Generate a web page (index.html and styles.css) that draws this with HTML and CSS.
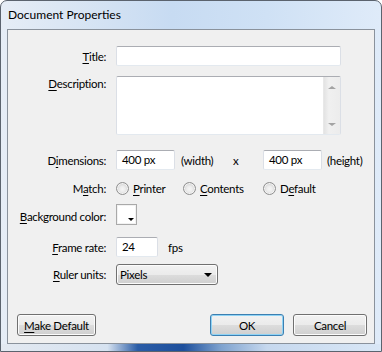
FILE: index.html
```html
<!DOCTYPE html>
<html lang="en">
<head>
  <meta charset="UTF-8" />
  <title>Document Properties</title>
  <link rel="stylesheet" href="styles.css">
</head>
<body>
  <div class="window">
    <div class="titlebar">Document Properties</div>
    <div class="client">
      <div class="row row-title">
        <label class="lbl"><u>T</u>itle:</label>
        <div class="field wide"></div>
      </div>

      <div class="row row-desc">
        <label class="lbl"><u>D</u>escription:</label>
        <div class="field textarea">
          <div class="ta-body"></div>
          <div class="ta-scroll">
            <span class="arrow-up"></span>
            <span class="arrow-down"></span>
          </div>
        </div>
      </div>

      <div class="row row-dims">
        <label class="lbl">D<u>i</u>mensions:</label>
        <div class="field dim">400 px</div>
        <span class="dim-unit">(width)</span>
        <span class="dim-x">x</span>
        <div class="field dim">400 px</div>
        <span class="dim-unit2">(height)</span>
      </div>

      <div class="row row-match">
        <label class="lbl">M<u>a</u>tch:</label>
        <div class="opt opt1"><span class="radio"></span><span><u>P</u>rinter</span></div>
        <div class="opt opt2"><span class="radio"></span><span><u>C</u>ontents</span></div>
        <div class="opt"><span class="radio"></span><span>D<u>e</u>fault</span></div>
      </div>

      <div class="row row-bg">
        <label class="lbl"><u>B</u>ackground color:</label>
        <div class="swatch"><span class="swatch-arrow"></span></div>
      </div>

      <div class="row row-fps">
        <label class="lbl"><u>F</u>rame rate:</label>
        <div class="field fps">24</div>
        <span class="fps-unit">fps</span>
      </div>

      <div class="row row-ruler">
        <label class="lbl"><u>R</u>uler units:</label>
        <div class="select">
          <span>Pixels</span>
          <span class="select-arrow"></span>
        </div>
      </div>

      <div class="buttons">
        <button class="btn btn-make"><u>M</u>ake Default</button>
        <div class="btn-group">
          <button class="btn btn-ok">OK</button>
          <button class="btn">Cancel</button>
        </div>
      </div>
    </div>
  </div>
</body>
</html>
```

FILE: styles.css
```css
* {
  margin: 0;
  padding: 0;
  box-sizing: border-box;
}
body {
  background: #ffffff;
  font-family: "Segoe UI", Lato, sans-serif;
  font-size: 11.5px;
  letter-spacing: -0.3px;
  color: #000;
  white-space: nowrap;
}
u {
  text-decoration: underline;
  text-underline-offset: 2px;
}
.window {
  width: 382px;
  height: 352px;
  border: 1px solid #5b636e;
  border-radius: 7px 7px 0 0;
  padding: 0 6px 7px;
  display: flex;
  flex-direction: column;
  background:
    linear-gradient(90deg, #e3e9f1 0%, #d6e2f0 28%, #2a5ca6 36%, #1d4f9c 48%, #7fa3cf 58%, #c6d8ee 70%, #d9e7f6 100%) bottom / 100% 7px no-repeat,
    linear-gradient(90deg, #e6edf6 0%, #dce7f4 15%, #c7dbf2 45%, #cfe1f5 70%, #dfebf9 100%);
}
.titlebar {
  height: 28px;
  line-height: 28px;
  padding-left: 1px;
  font-size: 12px;
  letter-spacing: 0;
}
.client {
  flex: 1;
  background: #f0f0f0;
  border: 1px solid #8a929c;
  display: flex;
  flex-direction: column;
  padding: 0 7px 7px 0;
}
.row {
  display: flex;
  align-items: center;
}
.lbl {
  width: 98px;
  margin-right: 10px;
  text-align: right;
  flex-shrink: 0;
}
.row-title { margin-top: 16px; }
.row-desc { margin-top: 10px; align-items: flex-start; }
.row-desc .lbl { padding-top: 1px; }
.row-dims { margin-top: 15px; }
.row-match { margin-top: 8px; height: 20px; }
.row-bg { margin-top: 6px; }
.row-bg .lbl { padding-top: 3px; }
.row-fps { margin-top: 12px; }
.row-ruler { margin-top: 7px; }

.field {
  height: 20px;
  background: #fff;
  border: 1px solid #dbdfe6;
  border-top-color: #abadb3;
  border-bottom-color: #e3e9ef;
  border-radius: 2px;
  padding: 0 5px;
  line-height: 18px;
}
.wide { width: 225px; }
.textarea {
  width: 225px;
  height: 59px;
  display: flex;
  padding: 0;
}
.ta-body { flex: 1; }
.ta-scroll {
  width: 17px;
  background: linear-gradient(90deg, #e3e3e3, #f0f0f0 30%, #ececec);
  border-left: 1px solid #e8e8e8;
  display: flex;
  flex-direction: column;
  justify-content: space-between;
  align-items: center;
  padding: 9px 0 8px;
}
.arrow-up {
  width: 0;
  height: 0;
  border-left: 4px solid transparent;
  border-right: 4px solid transparent;
  border-bottom: 3px solid #a3a3a3;
}
.arrow-down {
  width: 0;
  height: 0;
  border-left: 4px solid transparent;
  border-right: 4px solid transparent;
  border-top: 3px solid #a3a3a3;
}
.dim { width: 59px; }
.dim-unit { margin-left: 6px; width: 52px; }
.dim-x { width: 30px; }
.dim-unit2 { margin-left: 5px; }

.opt {
  display: flex;
  align-items: center;
  gap: 4px;
}
.opt1 { width: 67px; }
.opt2 { width: 80px; }
.radio {
  width: 13px;
  height: 13px;
  border-radius: 50%;
  border: 1px solid #8f8f8f;
  background: radial-gradient(circle at 50% 55%, #f6f6f6 0, #ececec 35%, #cfcfcf 75%, #e0e0e0 100%);
  box-shadow: inset 0 0 0 1px #f4f4f4;
}

.swatch {
  width: 21px;
  height: 21px;
  border: 1px solid #a9a9a9;
  background: #fff;
  box-shadow: inset 0 0 0 1px #f2f2f2;
  display: flex;
  justify-content: flex-end;
  align-items: flex-end;
  padding: 0 2px 3px 0;
}
.swatch-arrow {
  width: 0;
  height: 0;
  border-left: 3px solid transparent;
  border-right: 3px solid transparent;
  border-top: 3px solid #000;
}

.fps { width: 42px; }
.fps-unit { margin-left: 10px; }

.select {
  width: 102px;
  height: 21px;
  border: 1px solid #707070;
  border-radius: 3px;
  background: linear-gradient(#f2f2f2 0%, #ebebeb 50%, #dddddd 50%, #cfcfcf 100%);
  box-shadow: inset 0 0 0 1px #fcfcfc;
  display: flex;
  align-items: center;
  justify-content: space-between;
  padding: 0 5px 0 3px;
}
.select-arrow {
  width: 0;
  height: 0;
  border-left: 4px solid transparent;
  border-right: 4px solid transparent;
  border-top: 4px solid #000;
}

.buttons {
  margin-top: auto;
  display: flex;
  justify-content: space-between;
  padding-left: 9px;
}
.btn-group {
  display: flex;
  gap: 9px;
}
.btn {
  width: 74px;
  height: 22px;
  padding: 0;
  font: inherit;
  letter-spacing: inherit;
  color: #000;
  border: 1px solid #707070;
  border-radius: 3px;
  background: linear-gradient(#f2f2f2 0%, #ebebeb 50%, #dddddd 50%, #cfcfcf 100%);
  box-shadow: inset 0 0 0 1px #fcfcfc;
}
.btn-make { width: 79px; }
.btn-ok {
  border-color: #3c7fb1;
  box-shadow: inset 0 0 0 1px #8fd3f5;
}
```
